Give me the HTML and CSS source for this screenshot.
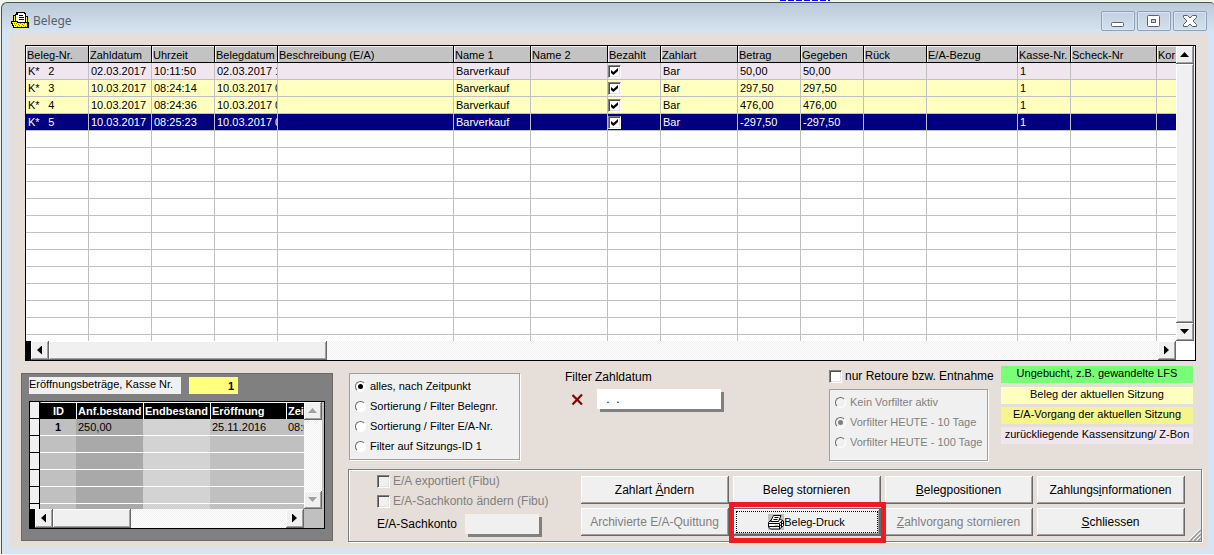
FILE: index.html
```html
<!DOCTYPE html>
<html lang="de">
<head>
<meta charset="utf-8">
<title>Belege</title>
<link rel="stylesheet" href="styles.css">
</head>
<body>
<main class="window">
  <header class="titlebar">
    <svg class="title-icon" width="18" height="17" viewBox="0 0 18 17" shape-rendering="crispEdges" aria-hidden="true">
      <path d="M2 3h4v6H2z" fill="#000"/>
      <path d="M3 4h3v5H3z" fill="#ff0"/>
      <path d="M5 0h8l2 2v9H4V2h1z" fill="#000"/>
      <path d="M7 1h6v1h1v8H5V3h2z" fill="#fff"/>
      <path d="M8 3h4v1H8zM8 5h5v1H8zM8 7h5v1H8z" fill="#000"/>
      <path d="M15 4h2v12h-2z" fill="#000"/>
      <path d="M15 5h1v6h-1z" fill="#ff0"/>
      <path d="M0 9h6l1 1h11v6H2v-2H1v-2H0z" fill="#000"/>
      <path d="M1 10h4l1 1h10v4H3v-2H2v-2H1z" fill="#ff0"/>
      <path d="M3 11h1v1H3zM5 11h1v1H5zM7 12h1v1H7zM9 11h1v1H9zM11 12h1v1h-1zM13 11h1v1h-1zM4 13h1v1H4zM6 14h1v1H6zM8 13h1v1H8zM10 14h1v1h-1zM12 13h1v1h-1zM14 14h1v1h-1z" fill="#808000"/>
    </svg>
    <h1 class="title">Belege</h1>
    <div class="win-buttons">
      <button class="win-btn" aria-label="Minimieren"><svg width="32" height="18" viewBox="0 0 32 18"><rect x="9.500" y="10.500" width="12" height="4" rx="1" fill="#fff" stroke="#5a6270"/></svg></button>
      <button class="win-btn" aria-label="Maximieren"><svg width="32" height="18" viewBox="0 0 32 18"><rect x="9.500" y="3.500" width="12" height="11" rx="1" fill="#fff" stroke="#5a6270"/><rect x="13.500" y="7.500" width="4" height="3" fill="#c8d4e0" stroke="#5a6270"/></svg></button>
      <button class="win-btn" aria-label="Fenster schließen"><svg width="32" height="18" viewBox="0 0 32 18"><path d="M9.500 3.500h4l2.500 2.500 2.500-2.500h4v2L19 9l3.500 3.500v2h-4L16 12l-2.500 2.500h-4v-2L13 9 9.500 5.500z" fill="#fff" stroke="#5a6270"/></svg></button>
    </div>
  </header>

  <div class="content">
    <section class="grid">
      <div class="viewport receipts-view">
        <table class="receipts">
          <colgroup><col class="w63"><col class="w63"><col class="w63"><col class="w63"><col class="w176"><col class="w77"><col class="w77"><col class="w53"><col class="w77"><col class="w63"><col class="w63"><col class="w63"><col class="w91"><col class="w53"><col class="w86"><col></colgroup>
          <thead><tr><th>Beleg-Nr.</th><th>Zahldatum</th><th>Uhrzeit</th><th>Belegdatum</th><th>Beschreibung (E/A)</th><th>Name 1</th><th>Name 2</th><th>Bezahlt</th><th>Zahlart</th><th>Betrag</th><th>Gegeben</th><th>Rück</th><th>E/A-Bezug</th><th>Kasse-Nr.</th><th>Scheck-Nr</th><th>Kor</th></tr></thead>
          <tbody id="receipt-rows">
            <tr class="past"><td>K*&ensp; 2</td><td>02.03.2017</td><td>10:11:50</td><td>02.03.2017 1</td><td></td><td>Barverkauf</td><td></td><td class="tick"><input type="checkbox" class="box" aria-label="Bezahlt" checked></td><td>Bar</td><td>50,00</td><td>50,00</td><td></td><td></td><td>1</td><td></td><td></td></tr>
            <tr class="current"><td>K*&ensp; 3</td><td>10.03.2017</td><td>08:24:14</td><td>10.03.2017 0</td><td></td><td>Barverkauf</td><td></td><td class="tick"><input type="checkbox" class="box" aria-label="Bezahlt" checked></td><td>Bar</td><td>297,50</td><td>297,50</td><td></td><td></td><td>1</td><td></td><td></td></tr>
            <tr class="current"><td>K*&ensp; 4</td><td>10.03.2017</td><td>08:24:36</td><td>10.03.2017 0</td><td></td><td>Barverkauf</td><td></td><td class="tick"><input type="checkbox" class="box" aria-label="Bezahlt" checked></td><td>Bar</td><td>476,00</td><td>476,00</td><td></td><td></td><td>1</td><td></td><td></td></tr>
            <tr class="selected"><td>K*&ensp; 5</td><td>10.03.2017</td><td>08:25:23</td><td>10.03.2017 0</td><td></td><td>Barverkauf</td><td></td><td class="tick"><input type="checkbox" class="box" aria-label="Bezahlt" checked></td><td>Bar</td><td>-297,50</td><td>-297,50</td><td></td><td></td><td>1</td><td></td><td></td></tr>
          </tbody>
        </table>
      </div>
      <div class="vbar">
        <button class="sb-btn" aria-label="Nach oben"><span class="arrow up"></span></button>
        <div class="thumb fill"></div>
        <button class="sb-btn" aria-label="Nach unten"><span class="arrow down"></span></button>
      </div>
      <div class="hbar">
        <button class="sb-btn" aria-label="Nach links"><span class="arrow left"></span></button>
        <div class="thumb receipts-thumb"></div>
        <div class="track"></div>
        <button class="sb-btn" aria-label="Nach rechts"><span class="arrow right"></span></button>
      </div>
    </section>

    <div class="lower">
      <section class="opening">
        <div class="opening-head">
          <label class="opening-label" for="kasse">Eröffnungsbeträge, Kasse Nr.</label>
          <input class="opening-nr" id="kasse" type="text" value="1">
        </div>
        <div class="grid">
          <div class="viewport amounts-view">
            <table class="amounts">
              <colgroup><col class="w10"><col class="w36"><col class="w67"><col class="w67"><col class="w76"><col></colgroup>
              <thead><tr><th class="sel"></th><th class="mid">ID</th><th>Anf.bestand</th><th>Endbestand</th><th>Eröffnung</th><th>Zeit</th></tr></thead>
              <tbody id="amount-rows">
                <tr><td class="sel"></td><td class="mid">1</td><td class="dark">250,00</td><td class="light"></td><td>25.11.2016</td><td>08:0</td></tr>
              </tbody>
            </table>
          </div>
          <div class="vbar">
            <button class="sb-btn" aria-label="Nach oben" disabled><span class="arrow up"></span></button>
            <div class="track"></div>
            <button class="sb-btn" aria-label="Nach unten" disabled><span class="arrow down"></span></button>
          </div>
          <div class="hbar">
            <button class="sb-btn" aria-label="Nach links"><span class="arrow left"></span></button>
            <div class="thumb amounts-thumb"></div>
            <div class="track"></div>
            <button class="sb-btn" aria-label="Nach rechts"><span class="arrow right"></span></button>
          </div>
          <div class="corner"></div>
        </div>
      </section>

      <div class="side">
        <div class="filters">
          <div class="options sort-options">
            <label class="option"><input type="radio" class="dot" name="sort" checked>alles, nach Zeitpunkt</label>
            <label class="option"><input type="radio" class="dot" name="sort">Sortierung / Filter Belegnr.</label>
            <label class="option"><input type="radio" class="dot" name="sort">Sortierung / Filter E/A-Nr.</label>
            <label class="option"><input type="radio" class="dot" name="sort">Filter auf Sitzungs-ID 1</label>
          </div>
          <div class="date-filter">
            <label for="zahldatum">Filter Zahldatum</label>
            <div class="date-row">
              <button class="clear" aria-label="Filter löschen"><svg width="13" height="13" viewBox="0 0 13 13"><path d="M1.500 2L11 11.500M11 1.500L1.500 11.500" stroke="#8b0000" stroke-width="2.200" fill="none"/></svg></button>
              <input class="field date-field" id="zahldatum" type="text" value=" .  .">
            </div>
          </div>
          <div class="prefilter">
            <label class="check"><input type="checkbox" class="box">nur Retoure bzw. Entnahme</label>
            <div class="options pre-options">
              <label class="option off"><input type="radio" class="dot" name="pre" disabled>Kein Vorfilter aktiv</label>
              <label class="option off"><input type="radio" class="dot" name="pre" checked disabled>Vorfilter HEUTE - 10 Tage</label>
              <label class="option off"><input type="radio" class="dot" name="pre" disabled>Vorfilter HEUTE - 100 Tage</label>
            </div>
          </div>
          <ul class="legend">
            <li class="unbooked">Ungebucht, z.B. gewandelte LFS</li>
            <li class="current">Beleg der aktuellen Sitzung</li>
            <li class="process">E/A-Vorgang der aktuellen Sitzung</li>
            <li class="past">zurückliegende Kassensitzung/ Z-Bon</li>
          </ul>
        </div>

        <section class="actions">
          <div class="account">
            <label class="check off"><input type="checkbox" class="box" disabled>E/A exportiert (Fibu)</label>
            <label class="check off"><input type="checkbox" class="box" disabled>E/A-Sachkonto ändern (Fibu)</label>
            <div class="account-row">
              <label for="sachkonto">E/A-Sachkonto</label>
              <input class="field account-field" id="sachkonto" type="text">
            </div>
          </div>
          <div class="buttons">
            <button class="btn">Zahlart <u>Ä</u>ndern</button>
            <button class="btn">Beleg stornieren</button>
            <button class="btn"><u>B</u>elegpositionen</button>
            <button class="btn">Zahlungs<u>i</u>nformationen</button>
            <button class="btn" disabled>Archivierte E/A-Quittung</button>
            <div class="marked">
              <button class="btn print">
                <svg width="16" height="16" viewBox="0 0 16 16" aria-hidden="true">
                  <path d="M0 0h16v16H0z" fill="#c0c0c0"/>
                  <path d="M.5 8.500l3-3h9l3 1.500v4.500l-4 3.500h-9l-2-2z" fill="#fff" stroke="#000"/>
                  <path d="M5.500 1.500h7.500l-2.500 6h-8z" fill="#fff" stroke="#000"/>
                  <path d="M6.500 3.500h4M5.500 5.500h4" stroke="#000"/>
                  <path d="M.5 9.500h10.500l4-3M.5 12.500h10.500l4-3.500M11.500 9.500V15M13.500 8v5" stroke="#000" fill="none"/>
                  <path d="M7 10.500h3v1.500H7z" fill="#e0e000"/>
                </svg><span>Beleg-Druck</span>
              </button>
            </div>
            <button class="btn" disabled><u>Z</u>ahlvorgang stornieren</button>
            <button class="btn"><u>S</u>chliessen</button>
          </div>
          <svg class="grip" width="12" height="12" viewBox="0 0 12 12" aria-hidden="true"><path d="M1 12L12 1M5 12l7-7M9 12l3-3" stroke="#999" stroke-width="1.500"/><path d="M0 11L11 0M4 11l7-7M8 11l3-3" stroke="#fff"/></svg>
        </section>
      </div>
    </div>
  </div>
</main>
<script src="script.js"></script>
</body>
</html>
```
FILE: styles.css
```css
* { box-sizing: border-box; }

body {
  margin: 0;
  background: #f0f5ec;
  font: 12px/14px "Liberation Sans", Arial, sans-serif;
  color: #000;
}

/* Edge of the application behind the window */
body::before {
  content: "";
  display: block;
  width: 50px;
  height: 1px;
  margin: 0 0 1px 780px;
  background: repeating-linear-gradient(90deg, #00f 0 6px, #f0f5ec 6px 8px);
}

button, input { font: inherit; color: inherit; margin: 0; padding: 0; border-radius: 0; }
table { border-collapse: separate; border-spacing: 0; table-layout: fixed; width: 100%; }

.window {
  margin: 0 0 1px 1px;
  padding: 0 6px 6px 7px;
  border: solid #4d5357;
  border-width: 1px 0 0 1px;
  border-radius: 6px 4px 0 0;
  background: linear-gradient(#bccad8, #d7e4f2 30px);
}

.titlebar { display: flex; align-items: center; height: 30px; padding: 5px 1px 0 2px; }
.title { margin: 0 auto 0 4px; font: 12px/16px "Noto Sans", "Open Sans", sans-serif; color: #56616c; }
.win-buttons { display: flex; gap: 2px; }
.win-btn {
  width: 34px;
  height: 20px;
  border: 1px solid #8e9fb8;
  border-radius: 2px;
  background: linear-gradient(#c3d0de, #d3e0ee);
  box-shadow: inset 0 0 0 1px #dbe6f1;
}
.win-btn svg { display: block; }

.content { padding: 12px 6px 6px 12px; background: #e6ded8; }

/* Data grids with their scroll bars */
.grid {
  display: grid;
  grid-template-columns: 1fr 18px;
  border: 1px solid #000;
  background: #fff;
}
.content > .grid { margin: 0 6px 0 4px; padding-right: 1px; }
.viewport { overflow: hidden; }
.receipts-view { height: 295px; }
.amounts-view { height: 107px; }

.w63 { width: 63px; } .w176 { width: 176px; } .w77 { width: 77px; }
.w53 { width: 53px; } .w91 { width: 91px; } .w86 { width: 86px; }
.w10 { width: 10px; } .w36 { width: 36px; } .w67 { width: 67px; } .w76 { width: 76px; }

th, td {
  height: 17px;
  padding: 0 0 0 2px;
  overflow: hidden;
  white-space: nowrap;
  text-align: left;
  font-size: 11px;
  line-height: 14px;
}
.receipts th {
  border: solid #000;
  border-width: 0 1px 1px 0;
  background: #c3c3c3;
  box-shadow: inset 1px 1px 0 #f4f4f4;
  padding: 1px 0 0 1px;
  font-weight: normal;
}
.receipts td { border: solid #c0c0c0; border-width: 0 1px 1px 0; }
.receipts th:last-child, .receipts td:last-child { border-right: 0; }
.receipts td.tick { padding: 1px 0 0; }
.past { background: #f0e6f0; }
.current { background: #ffffc0; }
.selected { background: #000080; color: #fff; }

.amounts { background: #c0c0c0; }
.amounts th {
  border: solid #fff;
  border-width: 1px 0 0 1px;
  background: #000;
  color: #fff;
  padding-left: 1px;
}
.amounts td { border-bottom: 1px solid #fff; }
.amounts .mid { padding: 0; text-align: center; font-weight: bold; }
.amounts th.mid { border-left-color: #000; }
.amounts .dark { background: #a9a9a9; }
.amounts .light { background: #d3d3d3; }
.amounts .sel { border: solid #000; border-width: 0 1px 1px 0; background: #f0f0f0; }

.vbar { display: flex; flex-direction: column; }
.hbar { display: flex; border-left: 5px solid #000; height: 19px; }
.vbar .sb-btn { height: 18px; }
.sb-btn {
  flex: none;
  display: grid;
  place-items: center;
  width: 18px;
  border: solid #696969;
  border-width: 0 1px 1px 0;
  background: #f0f0f0;
  box-shadow: inset 1px 1px 0 #fff, inset -1px -1px 0 #a0a0a0;
}
.thumb {
  border: solid #696969;
  border-width: 0 1px 1px 0;
  background: #f0f0f0;
  box-shadow: inset 1px 1px 0 #fff, inset -1px -1px 0 #a0a0a0;
}
.fill, .track { flex: 1; }
.track { background: repeating-conic-gradient(#fff 0 25%, #f0f0f0 0 50%) 0 0 / 2px 2px; }
.receipts-thumb { width: 278px; }
.amounts-thumb { width: 78px; }
.corner { background: #c0c0c0; }
.arrow { width: 9px; height: 5px; background: #000; }
.up { clip-path: polygon(50% 0, 100% 100%, 0 100%); }
.down { clip-path: polygon(0 0, 100% 0, 50% 100%); }
.left, .right { width: 5px; height: 9px; }
.left { clip-path: polygon(0 50%, 100% 0, 100% 100%); }
.right { clip-path: polygon(0 0, 100% 50%, 0 100%); }
.sb-btn:disabled .arrow { background: #a0a0a0; }

/* Tick boxes and radios */
.box, .dot { appearance: none; flex: none; display: grid; place-items: center; background: #fff; }
.box {
  width: 13px;
  height: 13px;
  border: 1px solid;
  border-color: #808080 #fff #fff #808080;
  box-shadow: inset 1px 1px 0 #505050, inset -1px -1px 0 #e3e3e3;
}
.box:checked::before {
  content: "";
  width: 7px;
  height: 7px;
  background: #000;
  clip-path: polygon(0 28%, 35% 58%, 100% 0, 100% 42%, 35% 100%, 0 72%);
}
.dot {
  width: 11px;
  height: 11px;
  border: 1px solid;
  border-color: #696969 #fff #fff #696969;
  border-radius: 50%;
}
.dot:checked::before { content: ""; width: 5px; height: 5px; border-radius: 50%; background: #000; }
.box:disabled, .dot:disabled { background: #f0f0f0; }
.dot:disabled:checked::before { background: #808080; }
.off { color: #808080; }
.check { display: flex; align-items: center; gap: 3px; white-space: nowrap; }

.lower { display: flex; gap: 15px; margin-top: 5px; }

.opening {
  flex: none;
  width: 312px;
  margin: 7px 0 1px;
  padding: 3px 7px 11px;
  border: 1px solid #696969;
  background: #808080;
}
.opening-head { display: flex; gap: 8px; margin-bottom: 7px; font-size: 11px; }
.opening-label { width: 152px; height: 17px; background: #f0f0f0; white-space: nowrap; }
.opening-nr {
  width: 49px;
  height: 17px;
  padding-right: 4px;
  border: 0;
  background: #ffff80;
  font-weight: bold;
  text-align: right;
}
.opening .grid { padding-right: 2px; background: #c0c0c0; }

.side { flex: 1; min-width: 0; display: flex; flex-direction: column; gap: 7px; }
.filters { flex: 1; display: flex; align-items: flex-start; padding: 0 9px 0 1px; }
.options {
  display: flex;
  flex-direction: column;
  gap: 6px;
  border: 1px solid #a0a0a0;
  box-shadow: 1px 1px 0 #fff;
  background: #f0f0f0;
}
.option { display: flex; align-items: center; gap: 4px; font-size: 11px; white-space: nowrap; }
.sort-options { width: 171px; height: 87px; margin-top: 7px; padding: 5px; }
.pre-options { width: 159px; height: 72px; padding: 5px; }

.date-filter { margin: 4px 0 0 45px; }
.date-row { display: flex; align-items: center; gap: 13px; margin: 5px 0 0 6px; }
.clear { width: 13px; height: 13px; border: 0; background: none; }
.clear svg { display: block; }
.field { border: 0; box-shadow: 3px 3px 0 #808080; }
.date-field { width: 124px; height: 20px; padding-left: 6px; background: #fff; white-space: pre; }

.prefilter { display: flex; flex-direction: column; gap: 6px; width: 172px; margin: 3px 0 0 auto; }

.legend { list-style: none; width: 192px; margin: 0; padding: 0; display: grid; gap: 3px; }
.legend li { height: 17px; font-size: 11px; line-height: 14px; text-align: center; white-space: nowrap; }
.legend .unbooked { background: #78ff78; margin-bottom: 1px; }
.legend .process { background: #f5f58c; }

.actions {
  position: relative;
  display: flex;
  justify-content: space-between;
  padding: 4px 16px 5px 28px;
  border: 1px solid #808080;
  box-shadow: inset 1px 1px 0 #fff, 1px 1px 0 #fff;
}
.account { display: flex; flex-direction: column; gap: 6px; }
.account-row { display: flex; align-items: center; gap: 8px; }
.account-field { width: 74px; height: 20px; background: #f0f0f0; }
.buttons { display: grid; grid-template-columns: repeat(4, 148px); gap: 4px; margin-top: 2px; }
.btn {
  width: 100%;
  height: 28px;
  padding-top: 1px;
  border: solid #696969;
  border-width: 0 1px 1px 0;
  background: #f0f0f0;
  box-shadow: inset 1px 1px 0 #fff, inset -1px -1px 0 #a0a0a0;
  white-space: nowrap;
}
.btn:disabled { color: #808080; }
.marked { position: relative; }
.marked::after {
  content: "";
  position: absolute;
  inset: -6px -5px -7px -4px;
  border: 5px solid #ed1c24;
  pointer-events: none;
}
.print {
  display: flex;
  align-items: center;
  justify-content: center;
  font-size: 11px;
  border-width: 1px 2px 2px 1px;
  outline: 1px dotted #000;
  outline-offset: -4px;
}
.grip { position: absolute; right: 0; bottom: 0; }
```
FILE: script.js
```js
// Fill both grids with blank rows down to the lower edge of their viewport.
function addBlankRows(id, count, cellClasses) {
  const body = document.getElementById(id);
  for (let i = 0; i < count; i++) {
    const row = body.insertRow();
    cellClasses.forEach((name) => { row.insertCell().className = name; });
  }
}

addBlankRows('receipt-rows', 13, new Array(16).fill(''));
addBlankRows('amount-rows', 5, ['sel', '', 'dark', 'light', '', '']);
```
